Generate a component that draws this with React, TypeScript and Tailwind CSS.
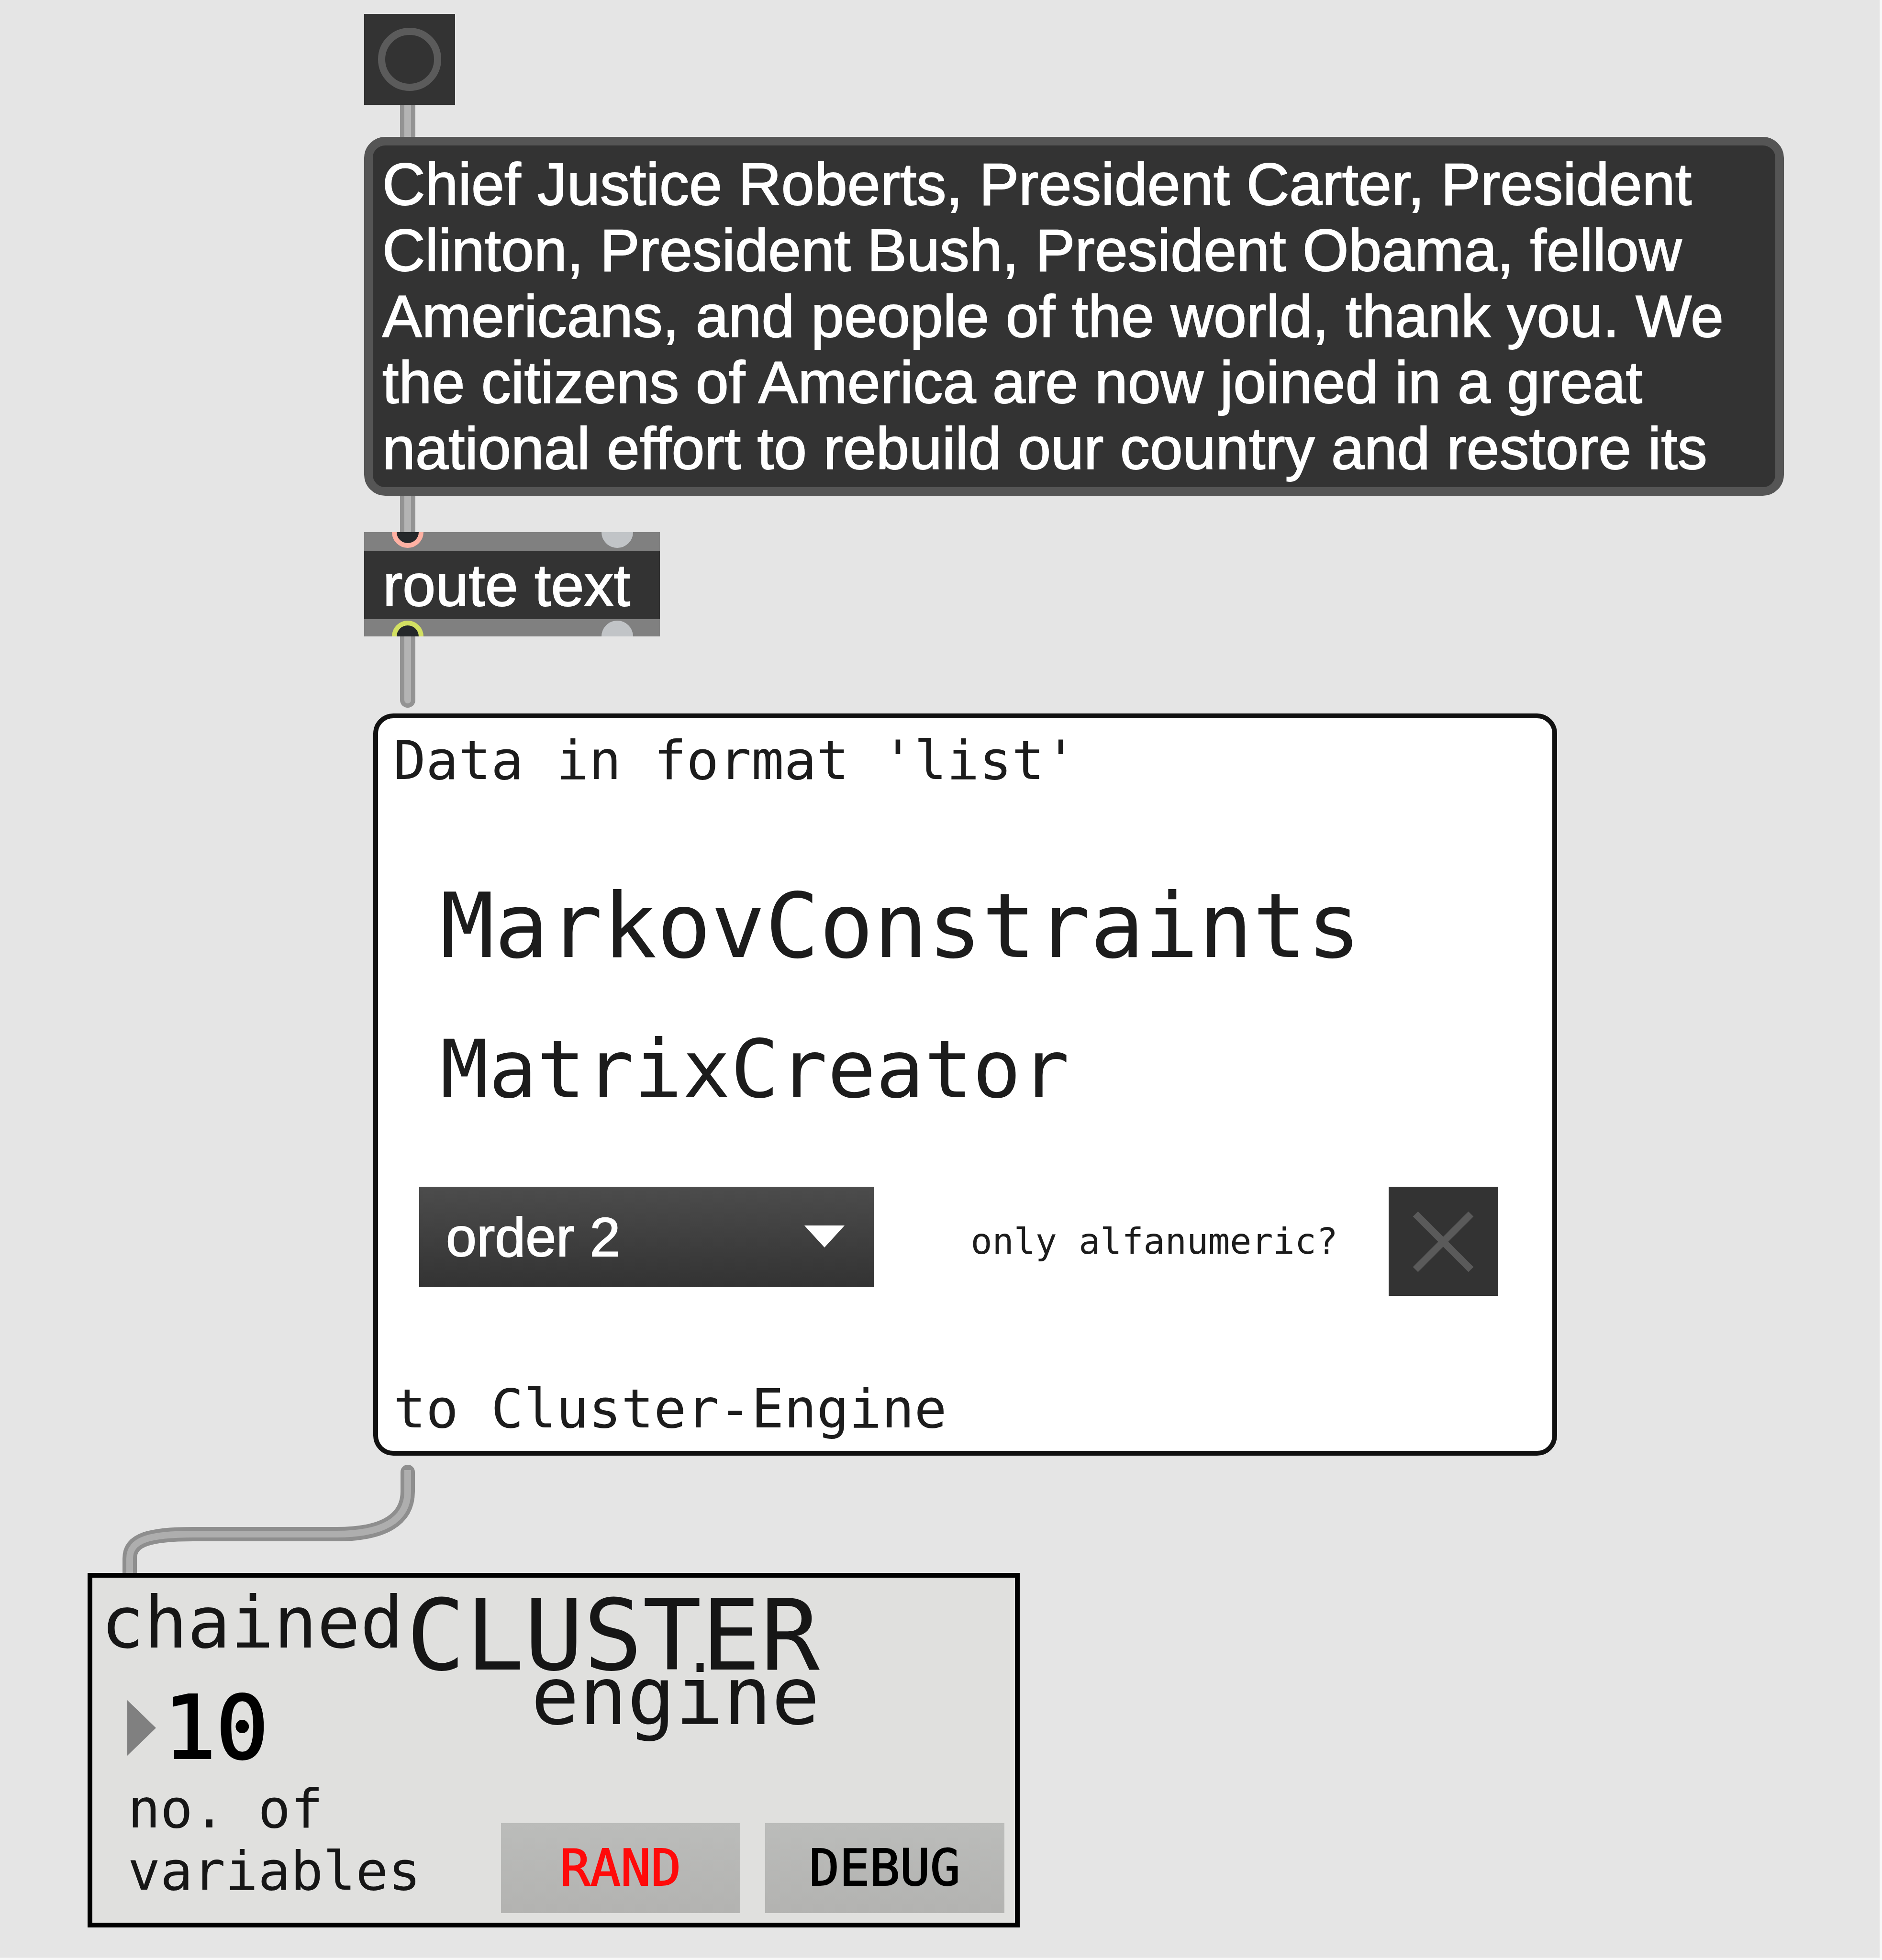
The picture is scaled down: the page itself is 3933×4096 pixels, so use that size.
import { useState } from "react";
import type { ReactNode } from "react";

const MESSAGE =
  "Chief Justice Roberts, President Carter, President Clinton, President Bush, President Obama, fellow Americans, and people of the world, thank you. We the citizens of America are now joined in a great national effort to rebuild our country and restore its";

function Cord({ children }: { children: ReactNode }) {
  return <div className="ml-[836px] flex w-8 flex-col">{children}</div>;
}

function Port({ ring, fill, outlet }: { ring: string; fill: string; outlet?: boolean }) {
  return (
    <svg viewBox="0 0 68 36" className="h-9 w-[68px]" aria-hidden="true">
      <circle cx="34" cy={outlet ? 36 : 0} r="28" fill={fill} stroke={ring} strokeWidth="10" />
    </svg>
  );
}

function PortRow({ ring, outlet }: { ring: string; outlet?: boolean }) {
  return (
    <div className={outlet ? "flex h-9 justify-between bg-[#808080] pr-[55px] pl-[57px]" : "flex h-10 justify-between bg-[#808080] pr-[55px] pl-[57px]"}>
      <Port ring={ring} fill="#25282a" outlet={outlet} />
      <Port ring="#c1c4c7" fill="#c1c4c7" outlet={outlet} />
    </div>
  );
}

function MatrixCreator() {
  const [alnum, setAlnum] = useState(false);
  return (
    <section className="ml-[780px] flex w-[2474px] flex-col rounded-[42px] border-[10px] border-[#111] bg-white pt-[22px] pb-[22px] font-['DejaVu_Sans_Mono',monospace] text-[#1c1c1c]">
      <p className="pl-8 text-[113px] leading-[132px]">Data in format 'list'</p>
      <h1 className="mt-[170px] pl-[130px] text-[188px] leading-[220px]">MarkovConstraints</h1>
      <h2 className="mt-[92px] pl-[130px] text-[168px] leading-[196px]">MatrixCreator</h2>
      <div className="mt-[147px] flex items-center justify-between pr-[114px] pl-[86px]">
        <div className="relative self-start">
          <select
            aria-label="Markov order"
            defaultValue="2"
            className="h-[210px] w-[950px] appearance-none bg-linear-to-b from-[#4c4c4c] to-[#333] pl-14 font-['Liberation_Sans',Arial,sans-serif] text-[115px] leading-[140px] text-white [-webkit-text-stroke:2px_white]"
          >
            <option value="1">order 1</option>
            <option value="2">order 2</option>
            <option value="3">order 3</option>
          </select>
          <svg viewBox="0 0 84 46" className="pointer-events-none absolute top-[81px] right-[61px] h-[46px] w-[84px]" aria-hidden="true">
            <path d="M0 0H84L42 46Z" fill="#fff" />
          </svg>
        </div>
        <div className="flex items-center gap-[106px]">
          <label htmlFor="alnum" className="text-[75px] leading-[88px] whitespace-nowrap">
            only alfanumeric?
          </label>
          <div className="relative size-[228px]">
            <input
              id="alnum"
              type="checkbox"
              checked={alnum}
              onChange={(e) => setAlnum(e.target.checked)}
              className="block size-full appearance-none bg-[#333]"
            />
            <svg viewBox="0 0 228 228" className="pointer-events-none absolute inset-0 size-full" aria-hidden="true">
              <path d="M56 57L172 173M172 57L56 173" stroke={alnum ? "#e8e8e8" : "#5a5a5a"} strokeWidth="15" fill="none" />
            </svg>
          </div>
        </div>
      </div>
      <p className="mt-[170px] pl-8 text-[113px] leading-[132px]">to Cluster-Engine</p>
    </section>
  );
}

function ClusterEngine() {
  return (
    <section className="ml-[183px] flex h-[741px] w-[1948px] border-[10px] border-black bg-[#e0e0de] font-['DejaVu_Sans_Mono',monospace] text-[#161616]">
      <div className="w-[656px] shrink-0">
        <p className="mt-1.5 pl-[18px] text-[150px] leading-[176px]">chained</p>
        <div className="mt-8 flex items-center gap-4 pl-[73px]">
          <svg viewBox="0 0 60 116" className="h-[116px] w-[60px]" aria-hidden="true">
            <path d="M0 0L60 58L0 116Z" fill="#808080" />
          </svg>
          <input
            id="variables"
            defaultValue="10"
            className="h-[200px] w-[260px] bg-transparent text-[182px] leading-[200px] text-black [-webkit-text-stroke:4px_black]"
          />
        </div>
        <label htmlFor="variables" className="mt-1 block pl-[74px] text-[113px] leading-[130px]">
          no. of
          <br />
          variables
        </label>
      </div>
      <div className="flex flex-1 flex-col justify-between pt-12 pb-5">
        <div className="flex w-fit flex-col items-end">
          <p className="text-[205px] leading-[146px]">CLUSTER</p>
          <p className="text-[167px] leading-[108px]">engine</p>
        </div>
        <div className="flex justify-end gap-[52px] pr-[22px]">
          <button type="button" className="h-[188px] w-[500px] bg-linear-to-b from-[#bbbcba] to-[#b3b3b1] text-[105px] leading-[124px] text-[#ff0a0a] [-webkit-text-stroke:2px_#ff0a0a]">
            RAND
          </button>
          <button type="button" className="h-[188px] w-[500px] bg-linear-to-b from-[#bbbcba] to-[#b3b3b1] text-[105px] leading-[124px] text-black [-webkit-text-stroke:2px_black]">
            DEBUG
          </button>
        </div>
      </div>
    </section>
  );
}

export default function App() {
  return (
    <main className="flex min-h-screen flex-col border-r-[5px] border-b-[5px] border-[#f8f8f8] bg-[#e5e5e5] pt-[29px]">
      <button type="button" aria-label="Bang" className="ml-[761px] flex size-[190px] items-center justify-center bg-[#333]">
        <span className="size-[132px] rounded-full border-[15px] border-[#5b5b5b]" />
      </button>
      <Cord>
        <div className="h-[67px] border-x-[9px] border-[#939393] bg-[#b4b4b4]" />
      </Cord>
      <button
        type="button"
        className="mr-[200px] ml-[761px] rounded-[44px] border-[18px] border-[#555] bg-[#333] px-5 pt-3 pb-3 text-left font-['Liberation_Sans',Arial,sans-serif] text-[124px] leading-[138px] text-white [-webkit-text-stroke:2px_white]"
      >
        {MESSAGE}
      </button>
      <Cord>
        <div className="h-[76px] border-x-[9px] border-[#939393] bg-[#b4b4b4]" />
      </Cord>
      <div className="ml-[761px] w-[618px] bg-[#333]">
        <PortRow ring="#ffb1a3" />
        <p className="px-[39px] font-['Liberation_Sans',Arial,sans-serif] text-[124px] leading-[142px] whitespace-nowrap text-white [-webkit-text-stroke:2px_white]">route text</p>
        <PortRow ring="#d3e062" outlet />
      </div>
      <Cord>
        <div className="mb-3 h-[149px] rounded-b-full border-x-[9px] border-b-[9px] border-[#939393] bg-[#b4b4b4]" />
      </Cord>
      <MatrixCreator />
      <svg viewBox="0 0 640 245" className="ml-[239px] h-[245px] w-[640px]" fill="none" aria-hidden="true">
        <path
          d="M613 34V75C613 135 560 164 465 164H165C75 164 32 175 32 215V245"
          stroke="#8e8e8e"
          strokeWidth="30"
        />
        <circle cx="613" cy="34" r="15" fill="#8e8e8e" />
        <path d="M613 30V75C613 135 560 164 465 164H165C75 164 32 175 32 215V245" stroke="#aeaeae" strokeWidth="14" />
      </svg>
      <ClusterEngine />
    </main>
  );
}
